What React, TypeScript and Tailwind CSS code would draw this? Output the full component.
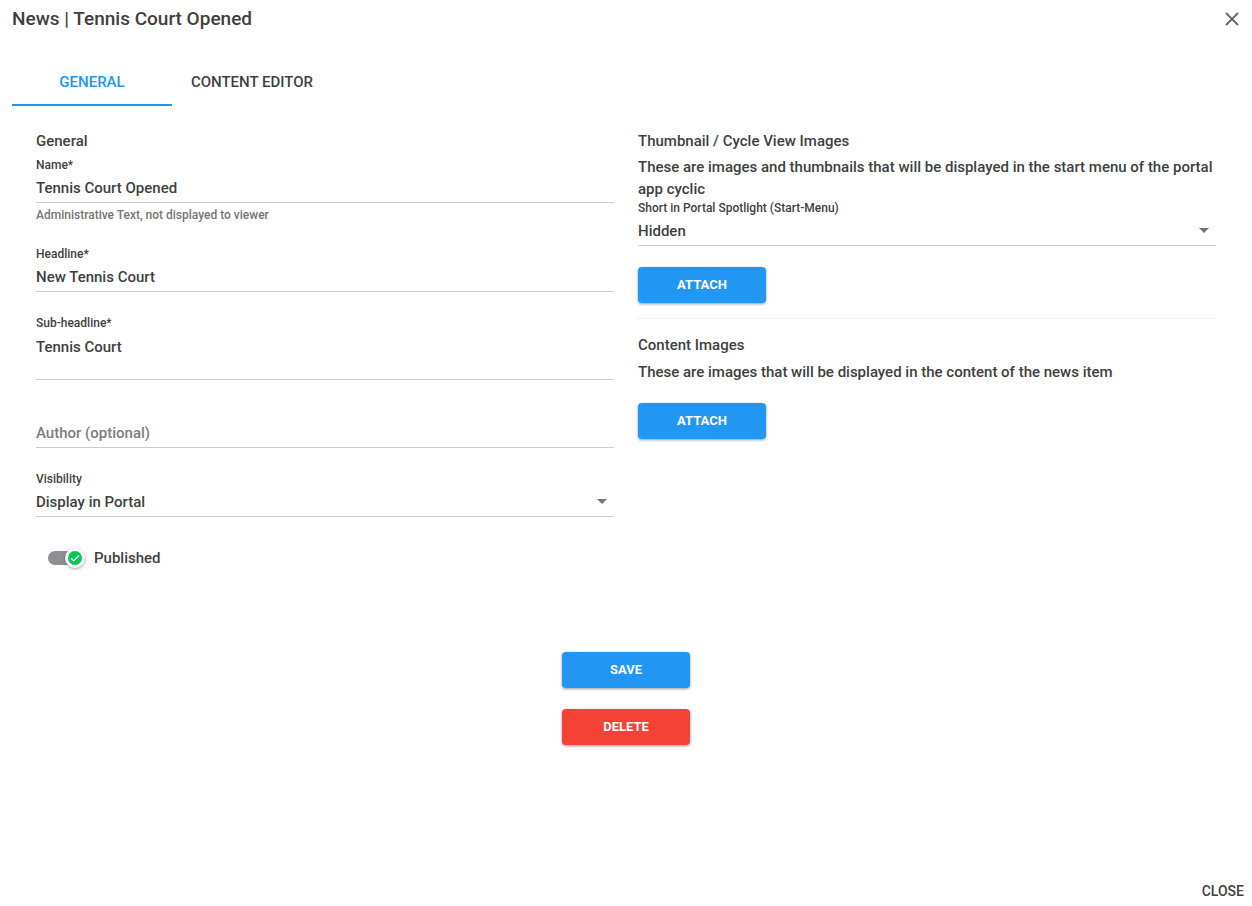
import { useState } from "react";
import type { ReactNode } from "react";

const labelClass = "block text-xs font-medium leading-4 text-[#3f3f3f]";
const controlClass =
  "block h-[30px] w-full rounded-none border-b border-[#cccccc] bg-transparent text-[15px] font-medium text-[#3f3f3f] outline-none placeholder:text-[#7d7d7d] placeholder:opacity-100 focus:border-[#2196f3]";

function SelectField({ id, label, options }: { id: string; label: string; options: string[] }) {
  return (
    <div>
      <label htmlFor={id} className={labelClass}>
        {label}
      </label>
      <div className="relative">
        <select id={id} className={`${controlClass} appearance-none pr-8`}>
          {options.map((option) => (
            <option key={option}>{option}</option>
          ))}
        </select>
        <svg
          viewBox="0 0 24 24"
          className="pointer-events-none absolute right-0 top-0.5 h-6 w-6 fill-[#757575]"
          aria-hidden="true"
        >
          <path d="M7 10l5 5 5-5z" />
        </svg>
      </div>
    </div>
  );
}

function ActionButton({ children, danger = false }: { children: ReactNode; danger?: boolean }) {
  return (
    <button
      type="button"
      className={`h-9 w-32 rounded text-[13px] font-bold uppercase text-white shadow-[0_1px_3px_rgba(0,0,0,0.4)] ${
        danger ? "bg-[#f44336]" : "bg-[#2196f3]"
      }`}
    >
      {children}
    </button>
  );
}

export default function App() {
  const [tab, setTab] = useState("General");
  const [published, setPublished] = useState(true);

  return (
    <div className="flex min-h-screen flex-col bg-white font-['Roboto',sans-serif] text-[15px] font-medium leading-6 text-[#3f3f3f]">
      <header className="flex h-[38px] items-center justify-between px-3">
        <h1 className="text-[19px]">News | Tennis Court Opened</h1>
        <button type="button" aria-label="Close dialog" className="flex h-4 w-4 items-center justify-center">
          <svg viewBox="0 0 16 16" className="h-4 w-4" fill="none" stroke="#666666" strokeWidth="1.8" aria-hidden="true">
            <path d="M2 2l12 12M14 2L2 14" />
          </svg>
        </button>
      </header>

      <div role="tablist" className="mt-5 flex px-3">
        {["General", "Content Editor"].map((name) => (
          <button
            key={name}
            type="button"
            role="tab"
            aria-selected={tab === name}
            onClick={() => setTab(name)}
            className={`h-12 w-40 border-b-2 pt-0.5 uppercase ${
              tab === name ? "border-[#2196f3] text-[#2196f3]" : "border-transparent"
            }`}
          >
            {name}
          </button>
        ))}
      </div>

      <main className="px-9 pt-[23px]">
        <div className="grid grid-cols-2 gap-6">
          <section>
            <h2>General</h2>
            <div className="mt-1 flex flex-col gap-[23px]">
              <div>
                <label htmlFor="name" className={labelClass}>
                  Name*
                </label>
                <input id="name" type="text" defaultValue="Tennis Court Opened" className={controlClass} />
                <p className="mt-1 text-xs leading-4 text-[#757575]">
                  Administrative Text, not displayed to viewer
                </p>
              </div>

              <div>
                <label htmlFor="headline" className={labelClass}>
                  Headline*
                </label>
                <input id="headline" type="text" defaultValue="New Tennis Court" className={controlClass} />
              </div>

              <div>
                <label htmlFor="subheadline" className={labelClass}>
                  Sub-headline*
                </label>
                <textarea
                  id="subheadline"
                  defaultValue="Tennis Court"
                  className="block h-[49px] w-full resize-none border-b border-[#cccccc] bg-transparent pt-1 outline-none focus:border-[#2196f3]"
                />
              </div>

              <div className="pt-[15px]">
                <input
                  type="text"
                  aria-label="Author (optional)"
                  placeholder="Author (optional)"
                  className={controlClass}
                />
              </div>

              <SelectField id="visibility" label="Visibility" options={["Display in Portal", "Hidden"]} />
            </div>

            <label className="ml-3 mt-[29px] flex h-6 w-fit cursor-pointer items-center gap-[9px]">
              <span className="relative flex h-5 w-[37px] items-center">
                <input
                  type="checkbox"
                  role="switch"
                  checked={published}
                  onChange={() => setPublished(!published)}
                  className="h-3.5 w-[34px] appearance-none rounded-full bg-[#8e8e93]"
                />
                <span
                  className={`pointer-events-none absolute top-0 flex h-5 w-5 items-center justify-center rounded-full bg-white shadow-[0_1px_3px_rgba(0,0,0,0.4)] ${
                    published ? "right-0" : "left-0"
                  }`}
                >
                  {published && (
                    <svg viewBox="0 0 14 14" className="h-3.5 w-3.5" aria-hidden="true">
                      <circle cx="7" cy="7" r="7" fill="#00c853" />
                      <path d="M3 7.2l2.7 2.6 5.3-5.3" fill="none" stroke="white" strokeWidth="1.5" />
                    </svg>
                  )}
                </span>
              </span>
              <span>Published</span>
            </label>
          </section>

          <section>
            <h2>Thumbnail / Cycle View Images</h2>
            <p className="mt-[3px] leading-[22px]">
              These are images and thumbnails that will be displayed in the start menu of the portal app cyclic
            </p>
            <SelectField id="spotlight" label="Short in Portal Spotlight (Start-Menu)" options={["Hidden", "Visible"]} />
            <div className="mt-[21px]">
              <ActionButton>Attach</ActionButton>
            </div>
            <hr className="mt-[15px] border-[#eeeeee]" />
            <h2 className="mt-3.5">Content Images</h2>
            <p className="mt-1 leading-[22px]">
              These are images that will be displayed in the content of the news item
            </p>
            <div className="mt-5">
              <ActionButton>Attach</ActionButton>
            </div>
          </section>
        </div>

        <div className="mt-[82px] flex flex-col items-center gap-[21px]">
          <ActionButton>Save</ActionButton>
          <ActionButton danger>Delete</ActionButton>
        </div>
      </main>

      <footer className="mt-auto flex h-[30px] items-center justify-end px-2">
        <button type="button" className="text-sm uppercase">
          Close
        </button>
      </footer>
    </div>
  );
}
